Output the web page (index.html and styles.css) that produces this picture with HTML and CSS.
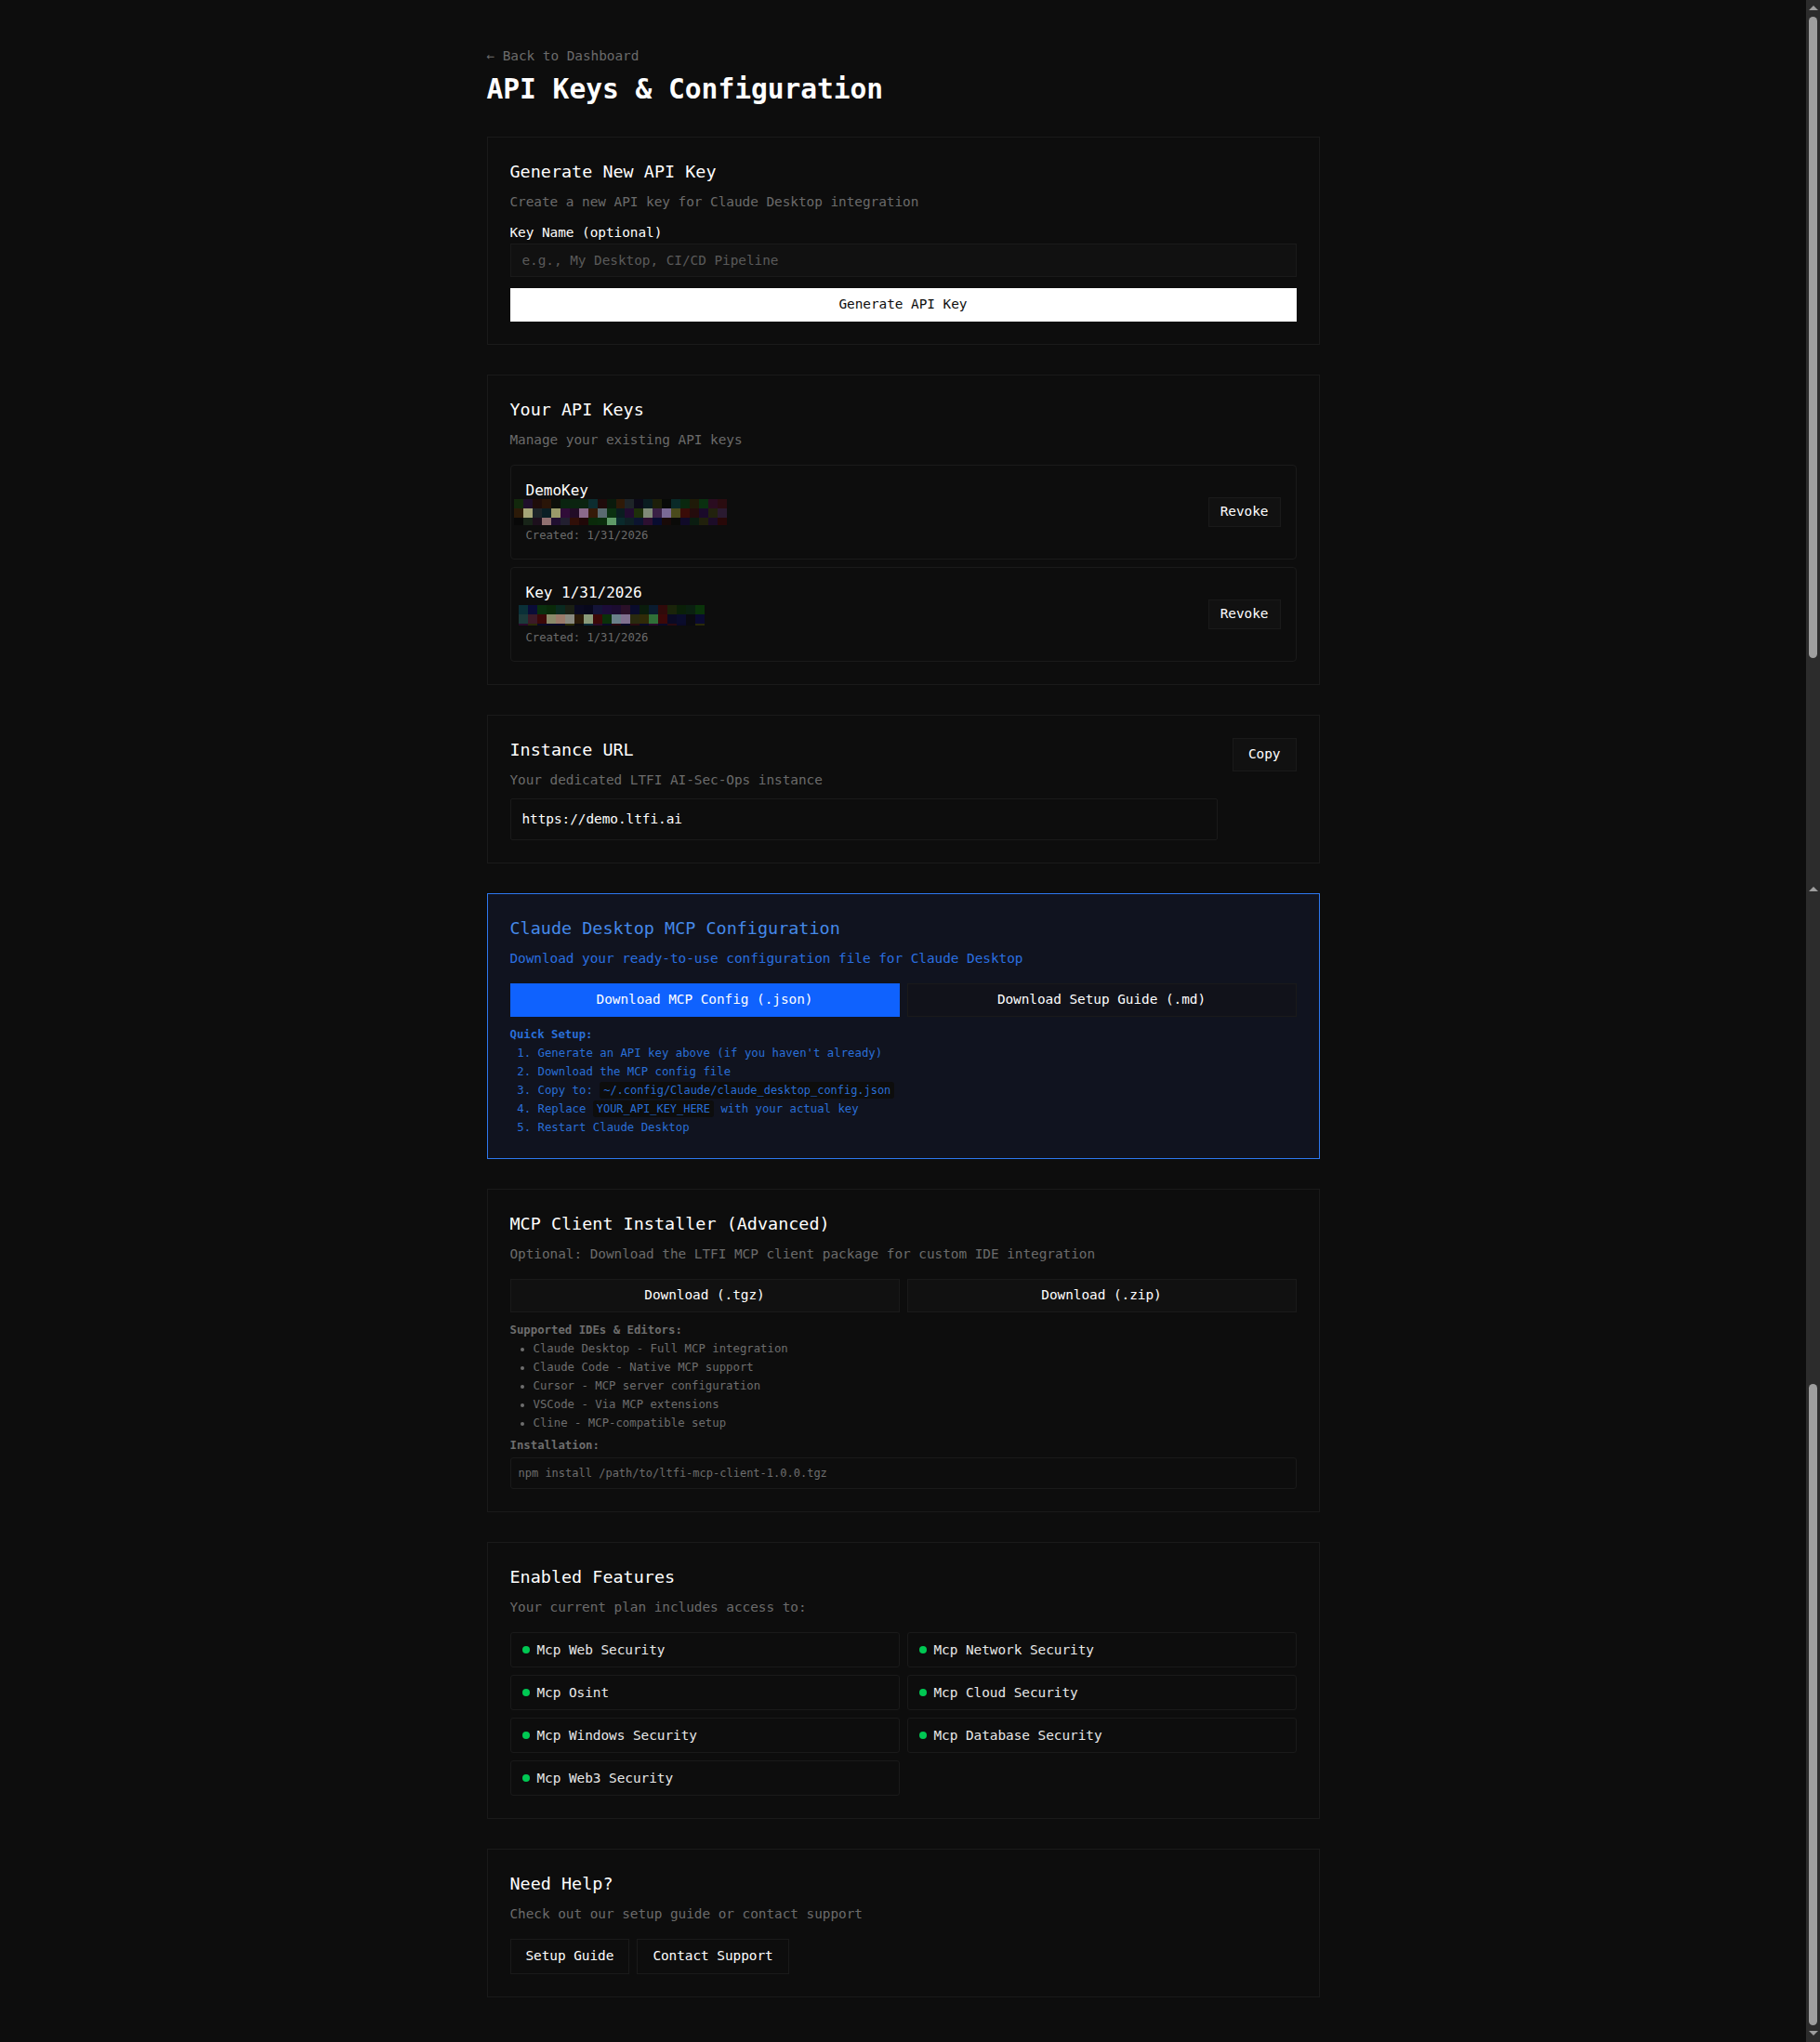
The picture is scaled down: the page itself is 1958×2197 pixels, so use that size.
FILE: index.html
```html
<!DOCTYPE html>
<html lang="en">
<head>
<meta charset="utf-8">
<title>API Keys &amp; Configuration</title>
<link rel="stylesheet" href="styles.css">
</head>
<body>
<main class="page">
  <div class="container">
    <a class="back" href="#">← Back to Dashboard</a>
    <h1 class="title">API Keys &amp; Configuration</h1>

    <section class="card">
      <h2 class="card-title">Generate New API Key</h2>
      <p class="card-desc desc-tight">Create a new API key for Claude Desktop integration</p>
      <label class="label" for="keyname">Key Name (optional)</label>
      <input class="input" id="keyname" placeholder="e.g., My Desktop, CI/CD Pipeline">
      <button class="btn btn-white btn-full">Generate API Key</button>
    </section>

    <section class="card">
      <h2 class="card-title">Your API Keys</h2>
      <p class="card-desc">Manage your existing API keys</p>
      <div class="key-list">
        <div class="key-item">
          <div class="key-info">
            <div class="key-name">DemoKey</div>
            <div class="key-mask">
              <svg class="mask mask-a" width="229" height="28" viewBox="0 0 23 2.8" shape-rendering="crispEdges"><g id="r"><rect x="0" y="0" width="1" height="1" fill="#12280c"/><rect x="1" y="0" width="1" height="1" fill="#1e0f2a"/><rect x="2" y="0" width="1" height="1" fill="#1f0d0a"/><rect x="3" y="0" width="1" height="1" fill="#2a1508"/><rect x="4" y="0" width="1" height="1" fill="#0d0f0a"/><rect x="5" y="0" width="1" height="1" fill="#0a2410"/><rect x="6" y="0" width="1" height="1" fill="#0b2410"/><rect x="7" y="0" width="1" height="1" fill="#0b2410"/><rect x="8" y="0" width="1" height="1" fill="#0d2d30"/><rect x="9" y="0" width="1" height="1" fill="#1f0b0b"/><rect x="10" y="0" width="1" height="1" fill="#0a1a0c"/><rect x="11" y="0" width="1" height="1" fill="#2f1a08"/><rect x="12" y="0" width="1" height="1" fill="#1e2428"/><rect x="13" y="0" width="1" height="1" fill="#0c0a18"/><rect x="14" y="0" width="1" height="1" fill="#0a1c20"/><rect x="15" y="0" width="1" height="1" fill="#1d1f0a"/><rect x="16" y="0" width="1" height="1" fill="#080a08"/><rect x="17" y="0" width="1" height="1" fill="#0a2a28"/><rect x="18" y="0" width="1" height="1" fill="#0a280f"/><rect x="19" y="0" width="1" height="1" fill="#1f1a08"/><rect x="20" y="0" width="1" height="1" fill="#0a3010"/><rect x="21" y="0" width="1" height="1" fill="#2a0c20"/><rect x="22" y="0" width="1" height="1" fill="#2a0c10"/></g><rect x="0" y="1" width="1" height="1" fill="#2c1a08"/><rect x="1" y="1" width="1" height="1" fill="#a5a577"/><rect x="2" y="1" width="1" height="1" fill="#1c2428"/><rect x="3" y="1" width="1" height="1" fill="#0a1e24"/><rect x="4" y="1" width="1" height="1" fill="#9a9a6a"/><rect x="5" y="1" width="1" height="1" fill="#300c38"/><rect x="6" y="1" width="1" height="1" fill="#220c26"/><rect x="7" y="1" width="1" height="1" fill="#8a6a8a"/><rect x="8" y="1" width="1" height="1" fill="#351a08"/><rect x="9" y="1" width="1" height="1" fill="#5a6a70"/><rect x="10" y="1" width="1" height="1" fill="#0a3010"/><rect x="11" y="1" width="1" height="1" fill="#0a1c20"/><rect x="12" y="1" width="1" height="1" fill="#220c30"/><rect x="13" y="1" width="1" height="1" fill="#1e300a"/><rect x="14" y="1" width="1" height="1" fill="#808a78"/><rect x="15" y="1" width="1" height="1" fill="#3a2045"/><rect x="16" y="1" width="1" height="1" fill="#7a6a95"/><rect x="17" y="1" width="1" height="1" fill="#4a4a1c"/><rect x="18" y="1" width="1" height="1" fill="#3a0c08"/><rect x="19" y="1" width="1" height="1" fill="#240c0c"/><rect x="20" y="1" width="1" height="1" fill="#1a0a2a"/><rect x="21" y="1" width="1" height="1" fill="#22220e"/><rect x="22" y="1" width="1" height="1" fill="#2a1a30"/><rect x="0" y="2" width="1" height=".8" fill="#080808"/><rect x="1" y="2" width="1" height=".8" fill="#182418"/><rect x="2" y="2" width="1" height=".8" fill="#1c0f1c"/><rect x="3" y="2" width="1" height=".8" fill="#907070"/><rect x="4" y="2" width="1" height=".8" fill="#200f30"/><rect x="5" y="2" width="1" height=".8" fill="#221f30"/><rect x="6" y="2" width="1" height=".8" fill="#300f08"/><rect x="7" y="2" width="1" height=".8" fill="#200808"/><rect x="8" y="2" width="1" height=".8" fill="#0a2a0a"/><rect x="9" y="2" width="1" height=".8" fill="#0a2c0c"/><rect x="10" y="2" width="1" height=".8" fill="#5f9a68"/><rect x="11" y="2" width="1" height=".8" fill="#0a2a2c"/><rect x="12" y="2" width="1" height=".8" fill="#0e2024"/><rect x="13" y="2" width="1" height=".8" fill="#0c1430"/><rect x="14" y="2" width="1" height=".8" fill="#2c0f30"/><rect x="15" y="2" width="1" height=".8" fill="#080c30"/><rect x="16" y="2" width="1" height=".8" fill="#180a08"/><rect x="17" y="2" width="1" height=".8" fill="#0a0a08"/><rect x="18" y="2" width="1" height=".8" fill="#100a28"/><rect x="19" y="2" width="1" height=".8" fill="#0a1c10"/><rect x="20" y="2" width="1" height=".8" fill="#20200c"/><rect x="21" y="2" width="1" height=".8" fill="#1c0c28"/><rect x="22" y="2" width="1" height=".8" fill="#280808"/></svg>
            </div>
            <div class="key-date">Created: 1/31/2026</div>
          </div>
          <button class="btn btn-sm">Revoke</button>
        </div>
        <div class="key-item">
          <div class="key-info">
            <div class="key-name">Key 1/31/2026</div>
            <div class="key-mask">
              <svg class="mask mask-b" width="200" height="22" viewBox="0 0 20 2.2" shape-rendering="crispEdges"><rect x="0" y="0" width="1" height="1" fill="#0a3038"/><rect x="1" y="0" width="1" height="1" fill="#0a0c38"/><rect x="2" y="0" width="1" height="1" fill="#0a300f"/><rect x="3" y="0" width="1" height="1" fill="#0a2a0a"/><rect x="4" y="0" width="1" height="1" fill="#0a2a20"/><rect x="5" y="0" width="1" height="1" fill="#1a1f14"/><rect x="6" y="0" width="1" height="1" fill="#0a0a20"/><rect x="7" y="0" width="1" height="1" fill="#08081c"/><rect x="8" y="0" width="1" height="1" fill="#141438"/><rect x="9" y="0" width="1" height="1" fill="#1c0c38"/><rect x="10" y="0" width="1" height="1" fill="#1c0c30"/><rect x="11" y="0" width="1" height="1" fill="#2a1028"/><rect x="12" y="0" width="1" height="1" fill="#0a0c2c"/><rect x="13" y="0" width="1" height="1" fill="#0a1c0c"/><rect x="14" y="0" width="1" height="1" fill="#0a1c30"/><rect x="15" y="0" width="1" height="1" fill="#300a0a"/><rect x="16" y="0" width="1" height="1" fill="#1a240a"/><rect x="17" y="0" width="1" height="1" fill="#0a2008"/><rect x="18" y="0" width="1" height="1" fill="#0a2010"/><rect x="19" y="0" width="1" height="1" fill="#0a340a"/><rect x="0" y="1" width="1" height="1" fill="#1c3a3a"/><rect x="1" y="1" width="1" height="1" fill="#3c1a28"/><rect x="2" y="1" width="1" height="1" fill="#3c0808"/><rect x="3" y="1" width="1" height="1" fill="#8a8a6a"/><rect x="4" y="1" width="1" height="1" fill="#9a7a6a"/><rect x="5" y="1" width="1" height="1" fill="#8a8a80"/><rect x="6" y="1" width="1" height="1" fill="#2a1a08"/><rect x="7" y="1" width="1" height="1" fill="#8a9a7a"/><rect x="8" y="1" width="1" height="1" fill="#3c0808"/><rect x="9" y="1" width="1" height="1" fill="#0a300a"/><rect x="10" y="1" width="1" height="1" fill="#6a808a"/><rect x="11" y="1" width="1" height="1" fill="#80708f"/><rect x="12" y="1" width="1" height="1" fill="#2a2a0f"/><rect x="13" y="1" width="1" height="1" fill="#302a08"/><rect x="14" y="1" width="1" height="1" fill="#307038"/><rect x="15" y="1" width="1" height="1" fill="#3c0808"/><rect x="16" y="1" width="1" height="1" fill="#0a0a24"/><rect x="17" y="1" width="1" height="1" fill="#0a0c2c"/><rect x="18" y="1" width="1" height="1" fill="#0a0a10"/><rect x="19" y="1" width="1" height="1" fill="#0a0a30"/><rect x="0" y="2" width="1" height=".2" fill="#2a0a2a"/><rect x="1" y="2" width="1" height=".2" fill="#2a2a08"/><rect x="2" y="2" width="1" height=".2" fill="#0a0a28"/><rect x="3" y="2" width="1" height=".2" fill="#0a0a28"/><rect x="4" y="2" width="1" height=".2" fill="#0a0a28"/><rect x="5" y="2" width="1" height=".2" fill="#2a2a08"/><rect x="6" y="2" width="1" height=".2" fill="#0a0a10"/><rect x="7" y="2" width="1" height=".2" fill="#0a2a38"/><rect x="8" y="2" width="1" height=".2" fill="#2a0a28"/><rect x="9" y="2" width="1" height=".2" fill="#0a0a28"/><rect x="10" y="2" width="1" height=".2" fill="#2a0a10"/><rect x="11" y="2" width="1" height=".2" fill="#0a0a28"/><rect x="12" y="2" width="1" height=".2" fill="#2a0a10"/><rect x="13" y="2" width="1" height=".2" fill="#0a0a28"/><rect x="14" y="2" width="1" height=".2" fill="#2a0a2a"/><rect x="15" y="2" width="1" height=".2" fill="#0a0a28"/><rect x="16" y="2" width="1" height=".2" fill="#2a0a10"/><rect x="17" y="2" width="1" height=".2" fill="#0a0a28"/><rect x="18" y="2" width="1" height=".2" fill="#0a0a10"/><rect x="19" y="2" width="1" height=".2" fill="#2a2a08"/></svg>
            </div>
            <div class="key-date">Created: 1/31/2026</div>
          </div>
          <button class="btn btn-sm">Revoke</button>
        </div>
      </div>
    </section>

    <section class="card card-row">
      <div class="card-main">
        <h2 class="card-title">Instance URL</h2>
        <p class="card-desc desc-url">Your dedicated LTFI AI-Sec-Ops instance</p>
        <div class="url-box">https://demo.ltfi.ai</div>
      </div>
      <button class="btn btn-copy">Copy</button>
    </section>

    <section class="card card-blue">
      <h2 class="card-title">Claude Desktop MCP Configuration</h2>
      <p class="card-desc">Download your ready-to-use configuration file for Claude Desktop</p>
      <div class="btn-grid">
        <button class="btn btn-blue">Download MCP Config (.json)</button>
        <button class="btn">Download Setup Guide (.md)</button>
      </div>
      <div class="small-block">
        <div class="small-head">Quick Setup:</div>
        <ol class="small-list">
          <li>Generate an API key above (if you haven't already)</li>
          <li>Download the MCP config file</li>
          <li>Copy to: <code class="code">~/.config/Claude/claude_desktop_config.json</code></li>
          <li>Replace <code class="code">YOUR_API_KEY_HERE</code> with your actual key</li>
          <li>Restart Claude Desktop</li>
        </ol>
      </div>
    </section>

    <section class="card">
      <h2 class="card-title">MCP Client Installer (Advanced)</h2>
      <p class="card-desc">Optional: Download the LTFI MCP client package for custom IDE integration</p>
      <div class="btn-grid">
        <button class="btn">Download (.tgz)</button>
        <button class="btn">Download (.zip)</button>
      </div>
      <div class="small-block muted">
        <div class="small-head">Supported IDEs &amp; Editors:</div>
        <ul class="small-list bullets">
          <li>Claude Desktop - Full MCP integration</li>
          <li>Claude Code - Native MCP support</li>
          <li>Cursor - MCP server configuration</li>
          <li>VSCode - Via MCP extensions</li>
          <li>Cline - MCP-compatible setup</li>
        </ul>
        <div class="small-head install-head">Installation:</div>
        <pre class="install-box">npm install /path/to/ltfi-mcp-client-1.0.0.tgz</pre>
      </div>
    </section>

    <section class="card">
      <h2 class="card-title">Enabled Features</h2>
      <p class="card-desc">Your current plan includes access to:</p>
      <div class="feature-grid">
        <div class="feature"><span class="dot"></span>Mcp Web Security</div>
        <div class="feature"><span class="dot"></span>Mcp Network Security</div>
        <div class="feature"><span class="dot"></span>Mcp Osint</div>
        <div class="feature"><span class="dot"></span>Mcp Cloud Security</div>
        <div class="feature"><span class="dot"></span>Mcp Windows Security</div>
        <div class="feature"><span class="dot"></span>Mcp Database Security</div>
        <div class="feature"><span class="dot"></span>Mcp Web3 Security</div>
      </div>
    </section>

    <section class="card">
      <h2 class="card-title">Need Help?</h2>
      <p class="card-desc">Check out our setup guide or contact support</p>
      <div class="help-row">
        <a class="btn btn-link" href="#">Setup Guide</a>
        <a class="btn btn-link" href="#">Contact Support</a>
      </div>
    </section>
  </div>
</main>
<aside class="scrollbar" aria-hidden="true">
  <span class="arrow arrow-up first-arrow"></span>
  <span class="thumb thumb-one"></span>
  <span class="arrow arrow-up second-arrow"></span>
  <span class="thumb thumb-two"></span>
  <span class="arrow arrow-down last-arrow"></span>
</aside>
</body>
</html>
```

FILE: styles.css
```css
* { box-sizing: border-box; }
html, body { margin: 0; padding: 0; height: 2197px; overflow: hidden; background: #0d0d0d; }
body {
  display: flex;
  color: #fff;
  font-family: "DejaVu Sans Mono", "Liberation Mono", monospace;
  font-size: 14.4px;
  line-height: 20px;
  letter-spacing: -0.04px;
}
.page { flex: 1; min-width: 0; padding-top: 50px; }
.container { width: 896px; margin: 0 auto; }

.back { display: block; color: #6b6b6b; text-decoration: none; height: 20px; }
.title { margin: 8px 0 35px; font-size: 29.6px; line-height: 36px; font-weight: 700; height: 34px; }

.card { border: 1px solid #1a1a1a; padding: 24px; margin-bottom: 32px; background: #0d0d0d; }
.card-title { margin: 0 0 10px; font-size: 18.4px; line-height: 26px; font-weight: 400; letter-spacing: 0.03px; }
.card-desc { margin: 0 0 18px; color: #6b6b6b; line-height: 18px; }
.desc-tight { margin-bottom: 14px; }
.label { display: block; line-height: 20px; margin-bottom: 2px; }
.input {
  display: block; width: 100%; height: 36px; padding: 0 12px;
  background: #111; border: 1px solid #1a1a1a; color: #fff;
  font: inherit; letter-spacing: inherit; margin-bottom: 12px; outline: 0;
}
.input::placeholder { color: #5a5a5a; opacity: 1; }

.btn {
  display: inline-flex; align-items: center; justify-content: center;
  height: 36px; padding: 0 16px 2px;
  background: #111; border: 1px solid #1a1a1a; color: #fff;
  font: inherit; letter-spacing: inherit; text-decoration: none; border-radius: 0;
}
.btn-white { background: #fff; border-color: #fff; color: #0d0d0d; }
.btn-full { display: flex; width: 100%; }
.btn-blue { background: #0f62fe; border-color: #0f62fe; }
.btn-sm { height: 32px; padding: 0 12px 2px; flex: none; }
.btn-copy { flex: none; }
.btn-link { height: 38px; background: transparent; }

.key-list { display: flex; flex-direction: column; gap: 8px; }
.key-item {
  display: flex; align-items: center; justify-content: space-between;
  border: 1px solid #1a1a1a; border-radius: 4px; padding: 16px;
}
.key-name { line-height: 22px; font-size: 16px; letter-spacing: 0; }
.key-mask { position: relative; height: 28px; }
.mask { position: absolute; display: block; }
.mask-a { left: -13px; top: -2px; }
.mask-b { left: -8px; top: 2px; }
.key-date { font-size: 12.24px; color: #6b6b6b; line-height: 18px; }

.card-row { display: flex; gap: 16px; align-items: flex-start; }
.card-main { flex: 1; min-width: 0; }
.desc-url { margin-bottom: 11px; }
.url-box { height: 45px; display: flex; align-items: center; padding: 0 12px 2px; background: #0d0d0d; border: 1px solid #1a1a1a; border-radius: 2px; }

.card-blue { border-color: #2d78f0; background: #10131f; padding-bottom: 23px; }
.card-blue .card-title { color: #4589e8; }
.card-blue .card-desc { color: #2a6fe0; }
.card-blue .btn:not(.btn-blue) { background: #11121a; }

.btn-grid { display: grid; grid-template-columns: 1fr 1fr; gap: 8px; }
.small-block { font-size: 12.32px; line-height: 20px; color: #2a6fd8; margin-top: 9px; letter-spacing: 0; }
.small-head { font-weight: 700; }
.small-list { margin: 0; padding-left: 30px; }
.small-list li { height: 20px; }
.code { font: inherit; font-size: 11.95px; background: #0d0d0d; border-radius: 3px; padding: 2px 4px; }
.muted { color: #6e6e6e; }
.bullets { padding-left: 25px; }
.install-head { margin-top: 4px; }
.install-box {
  margin: 3px 0 0; height: 34px; padding: 0 8px 1px; display: flex; align-items: center;
  font: inherit; font-size: 12px; color: #6e6e6e;
  border: 1px solid #1a1a1a; border-radius: 3px; background: #0d0d0d;
}

.feature-grid { display: grid; grid-template-columns: 1fr 1fr; gap: 8px; }
.feature {
  display: flex; align-items: center; height: 38px; padding: 0 12px 1px;
  border: 1px solid #1a1a1a; border-radius: 3px; color: #e8e8e8;
}
.dot { width: 8px; height: 8px; border-radius: 50%; background: #00c853; margin-right: 8px; flex: none; }

.help-row { display: flex; gap: 8px; }

.scrollbar {
  flex: none; width: 15px; height: 2197px; background: #2c2c2c;
  display: flex; flex-direction: column; align-items: center;
}
.thumb { display: block; width: 9px; background: #9e9e9e; border-radius: 5px; flex: none; }
.arrow { display: block; width: 0; height: 0; border-left: 5px solid transparent; border-right: 5px solid transparent; flex: none; }
.arrow-up { border-bottom: 5px solid #9e9e9e; }
.arrow-down { border-top: 5px solid #9e9e9e; }
.first-arrow { margin-top: 6px; }
.thumb-one { margin-top: 7px; height: 690px; }
.second-arrow { margin-top: 246px; }
.thumb-two { margin-top: 530px; height: 690px; }
.last-arrow { margin-top: 6px; }
```
